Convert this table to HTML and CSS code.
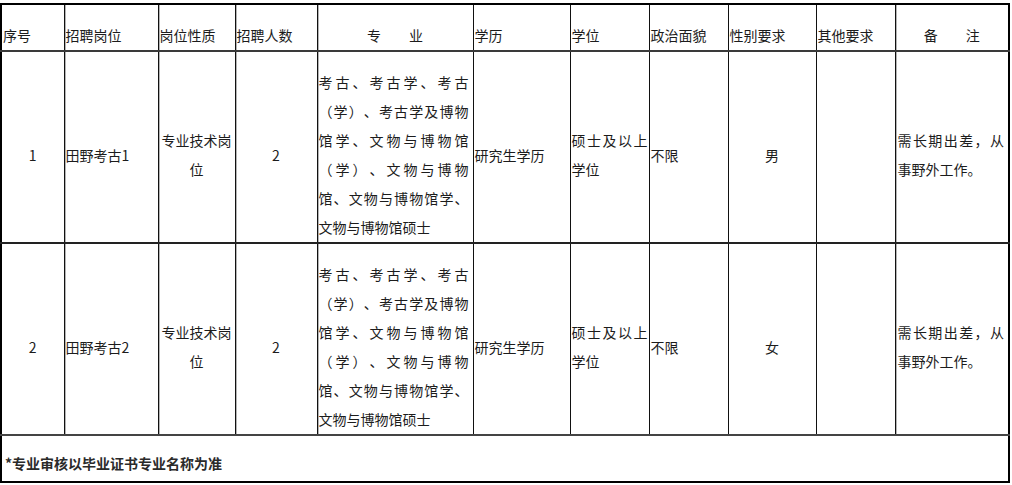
FILE: index.html
```html
<!DOCTYPE html>
<html lang="zh-CN">
<head>
<meta charset="utf-8">
<title>招聘岗位表</title>
<link rel="stylesheet" href="styles.css">
</head>
<body>
<div class="wrap">
<table class="grid">
  <colgroup>
    <col class="c1"><col class="c2"><col class="c3"><col class="c4"><col class="c5"><col class="c6"><col class="c7"><col class="c8"><col class="c9"><col class="c10"><col class="c11">
  </colgroup>
  <tr class="head">
    <td>序号</td>
    <td class="halo">招聘岗位</td>
    <td class="halo">岗位性质</td>
    <td class="halo">招聘人数</td>
    <td class="halo center">专　　业</td>
    <td>学历</td>
    <td>学位</td>
    <td>政治面貌</td>
    <td>性别要求</td>
    <td>其他要求</td>
    <td class="halo center">备　　注</td>
  </tr>
  <tr class="row">
    <td class="center">1</td>
    <td class="halo">田野考古1</td>
    <td class="halo center">专业技术岗位</td>
    <td class="halo center">2</td>
    <td class="halo major">考古、考古学、考古（学）、考古学及博物馆学、文物与博物馆（学）、文物与博物馆、文物与博物馆学、文物与博物馆硕士</td>
    <td>研究生学历</td>
    <td class="just">硕士及以上学位</td>
    <td>不限</td>
    <td class="center">男</td>
    <td></td>
    <td class="halo note">需长期出差，从事野外工作。</td>
  </tr>
  <tr class="row row2">
    <td class="center">2</td>
    <td class="halo">田野考古2</td>
    <td class="halo center">专业技术岗位</td>
    <td class="halo center">2</td>
    <td class="halo major">考古、考古学、考古（学）、考古学及博物馆学、文物与博物馆（学）、文物与博物馆、文物与博物馆学、文物与博物馆硕士</td>
    <td>研究生学历</td>
    <td class="just">硕士及以上学位</td>
    <td>不限</td>
    <td class="center">女</td>
    <td></td>
    <td class="halo note">需长期出差，从事野外工作。</td>
  </tr>
  <tr class="foot">
    <td colspan="11">*专业审核以毕业证书专业名称为准</td>
  </tr>
</table>
</div>
</body>
</html>
```

FILE: styles.css
```css
html, body {
  margin: 0;
  padding: 0;
  background: #fff;
}

.wrap {
  padding-top: 3px;
}

.grid {
  width: 1008px;
  table-layout: fixed;
  border-collapse: collapse;
  border: 2px solid #000;
  font-family: "Noto Sans CJK SC", "Noto Sans", sans-serif;
  font-size: 14px;
  line-height: 29px;
  color: #1c1c1c;
  text-spacing-trim: space-all;
  font-kerning: none;
}

.c1 { width: 63px; }
.c2 { width: 94px; }
.c3 { width: 77px; }
.c4 { width: 82px; }
.c5 { width: 156px; }
.c6 { width: 97px; }
.c7 { width: 79px; }
.c8 { width: 79px; }
.c9 { width: 88px; }
.c10 { width: 79px; }
.c11 { width: 114px; }

.grid td {
  border: 1px solid #111;
  padding: 16px 1px 0 1px;
  vertical-align: middle;
  text-align: left;
  overflow: hidden;
}

.grid td.halo {
  box-shadow: inset 1px 0 0 #b4b4b4;
}

.head {
  height: 47px;
}

.head td {
  border-bottom: 2px solid #3a3a3a;
}

.row {
  height: 191px;
}

.row td {
  border-bottom: 2px solid #222;
}

.row2 td {
  border-bottom: 2px solid #444;
}

.grid td.center {
  text-align: center;
}

.grid td.just {
  text-align: justify;
}

.grid td.major {
  text-align: justify;
  padding-right: 4px;
}

.grid td.note {
  text-align: justify;
  padding-left: 2px;
  padding-right: 4px;
}

.foot {
  height: 47px;
}

.grid .foot td {
  padding: 10px 2px 0 3px;
  font-weight: 700;
  color: #2a2a2a;
}
```
